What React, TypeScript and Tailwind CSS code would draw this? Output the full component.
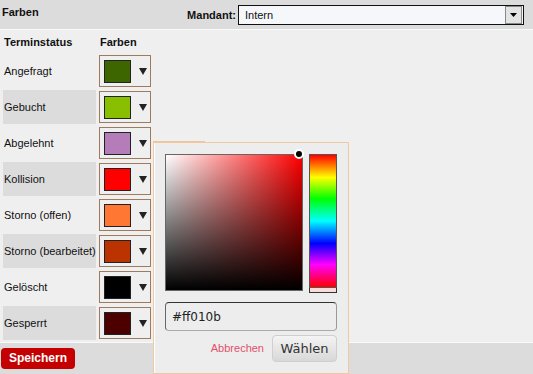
import React from "react";

const rows: { label: string; color: string; gray: boolean }[] = [
  { label: "Angefragt", color: "#3d6600", gray: false },
  { label: "Gebucht", color: "#88c000", gray: true },
  { label: "Abgelehnt", color: "#b47cb8", gray: false },
  { label: "Kollision", color: "#ff0000", gray: true },
  { label: "Storno (offen)", color: "#ff7733", gray: false },
  { label: "Storno (bearbeitet)", color: "#bb3300", gray: true },
  { label: "Gelöscht", color: "#000000", gray: false },
  { label: "Gesperrt", color: "#4d0000", gray: true },
];

function Arrow() {
  return (
    <svg width="8" height="8" viewBox="0 0 8 8">
      <polygon points="0,1 8,1 4,8" fill="#222" />
    </svg>
  );
}

export default function App() {
  return (
    <div
      className="relative w-[533px] h-[374px] overflow-hidden bg-[#efefef] text-[11px] text-[#111] flex flex-col"
      style={{ fontFamily: '"Liberation Sans", Arial, sans-serif' }}
    >
      {/* Header */}
      <div className="h-[30px] shrink-0 bg-[#dcdcdc] border-b border-[#fafafa] flex items-start">
        <div className="pl-[2px] pt-[5px] font-bold leading-[14px]">Farben</div>
        <div className="ml-auto flex items-center pt-[5px] pr-[9px]">
          <span className="font-bold mr-[2px]">Mandant:</span>
          <div className="w-[286px] h-[20px] border border-[#111] bg-[#f5f7fb] flex items-center">
            <span className="pl-[6px]">Intern</span>
            <div className="ml-auto mr-[1px] w-[17px] h-[18px] bg-[#e3e3e3] border border-[#888] flex items-center justify-center">
              <svg width="7" height="4" viewBox="0 0 7 4">
                <polygon points="0,0 7,0 3.5,4" fill="#000" />
              </svg>
            </div>
          </div>
        </div>
      </div>

      {/* Content */}
      <div className="flex-1 flex flex-col">
        <div className="h-[24px] flex items-center font-bold">
          <div className="w-[96px] pl-[4px]">Terminstatus</div>
          <div className="pl-[4px]">Farben</div>
        </div>
        <div className="flex flex-col gap-[2px] pl-[3px]">
          {rows.map((r) => (
            <div key={r.label} className="h-[34px] flex items-center gap-[3px]">
              <div
                className={`w-[93px] h-[34px] flex items-center pl-[1px] whitespace-nowrap ${
                  r.gray ? "bg-[#dcdcdc]" : ""
                }`}
              >
                {r.label}
              </div>
              <div className="w-[52px] h-[32px] border border-[#9c7b5e] flex items-center pl-[4px] gap-[8px]">
                <div
                  className="w-[27px] h-[23px] border border-[#222]"
                  style={{ backgroundColor: r.color }}
                />
                <Arrow />
              </div>
            </div>
          ))}
        </div>
      </div>

      {/* Footer */}
      <div className="h-[32px] shrink-0 bg-[#dcdcdc] border-t border-[#fafafa] pt-[5px] pl-[1px]">
        <button className="w-[74px] h-[21px] rounded-[4px] bg-[#c40000] text-white font-bold text-[12px] leading-[21px]">
          Speichern
        </button>
      </div>

      {/* Color picker popup */}
      <div className="absolute left-[153px] top-[141px] w-[196px] h-[233px]">
        <div className="absolute left-0 top-0 w-[52px] h-[2px] bg-[#f0c49a]" />
        <div className="absolute left-0 top-[1px] w-[196px] h-[232px] border border-[#f0c8a2] bg-[#ededed] shadow-[inset_1px_0_0_#ffffff] pt-[11px] pl-[11px] flex flex-col">
          <div className="flex gap-[6px]">
            <div className="relative w-[138px] h-[137px] border border-[#666]">
              <div
                className="w-full h-full"
                style={{
                  background:
                    "linear-gradient(to top, #000, rgba(0,0,0,0)), linear-gradient(to right, #fff, #ff0000)",
                }}
              />
              <div className="absolute right-[-2px] top-[-6px] w-[10px] h-[10px] rounded-full bg-black border-2 border-white" />
            </div>
            <div className="flex flex-col">
              <div
                className="w-[28px] h-[134px] border border-[#555]"
                style={{
                  background:
                    "linear-gradient(to bottom, #ff0000 0%, #ffff00 17%, #00ff00 33%, #00ffff 50%, #0000ff 67%, #ff00ff 83%, #ff0000 100%)",
                }}
              />
              <div className="w-[28px] h-[5px] bg-[#fbdada] border border-[#333] border-t-0" />
            </div>
          </div>
          <div
            className="mt-[9px] w-[172px] h-[29px] rounded-[4px] border border-[#aaa] border-t-[#333] border-l-[#666] border-r-[#999] bg-[#ededed] flex items-center pl-[6px] text-[12px] text-[#222]"
            style={{ fontFamily: '"DejaVu Sans", Verdana, sans-serif' }}
          >
            #ff010b
          </div>
          <div className="mt-[4px] w-[172px] flex items-center justify-end gap-[8px]">
            <span className="text-[#e2506c] text-[11px]">Abbrechen</span>
            <button
              className="w-[65px] h-[27px] rounded-[4px] border border-[#cfcfcf] bg-gradient-to-b from-[#f4f4f4] to-[#d8d8d8] text-[13px] text-[#333]"
              style={{ fontFamily: '"DejaVu Sans", Verdana, sans-serif' }}
            >
              Wählen
            </button>
          </div>
        </div>
      </div>
    </div>
  );
}
